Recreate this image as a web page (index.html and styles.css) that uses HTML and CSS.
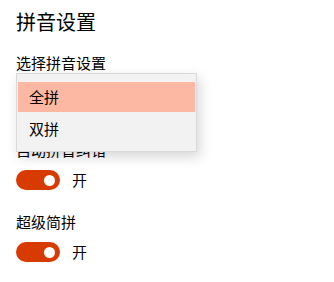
FILE: index.html
```html
<!DOCTYPE html>
<html lang="zh">
<head>
<meta charset="utf-8">
<link rel="stylesheet" href="styles.css">
</head>
<body>
<div class="page">
  <h1 class="title">拼音设置</h1>
  <div class="field">
    <div class="label">选择拼音设置</div>
    <div class="combo-space"></div>
    <div class="menu">
      <div class="item selected">全拼</div>
      <div class="item">双拼</div>
    </div>
  </div>
  <div class="setting">
    <div class="label">自动拼音纠错</div>
    <div class="toggle-row"><span class="toggle"><span class="knob"></span></span><span class="state">开</span></div>
  </div>
  <div class="setting">
    <div class="label">超级简拼</div>
    <div class="toggle-row"><span class="toggle"><span class="knob"></span></span><span class="state">开</span></div>
  </div>
</div>
</body>
</html>
```
FILE: styles.css
```css
html, body {
  margin: 0;
  padding: 0;
  background: #ffffff;
}
body {
  font-family: "Noto Sans CJK SC", "Noto Sans", sans-serif;
  color: #000;
  width: 334px;
  height: 282px;
  overflow: hidden;
}
.page {
  padding: 8px 16px 0 16px;
}
.title {
  font-size: 20px;
  font-weight: 400;
  line-height: 28px;
  margin: 0;
}
.field {
  position: relative;
  margin-top: 17px;
}
.label {
  font-size: 15px;
  line-height: 20px;
}
.combo-space {
  height: 67px;
}
.menu {
  position: absolute;
  left: 0;
  top: 20px;
  width: 177px;
  height: 69px;
  background: #f2f2f2;
  border: 1px solid #d9d9d9;
  padding: 8px 1px 0 1px;
  box-sizing: content-box;
  box-shadow: 3px 5px 12px rgba(0,0,0,0.16);
  z-index: 2;
}
.item {
  height: 30px;
  line-height: 30px;
  padding-left: 11px;
  font-size: 15px;
}
.item + .item {
  margin-top: 2px;
}
.selected {
  background: #fcb8a2;
}
.setting + .setting {
  margin-top: 22px;
}
.toggle-row {
  display: flex;
  align-items: center;
  gap: 12px;
  margin-top: 10px;
  height: 20px;
}
.toggle {
  width: 44px;
  height: 20px;
  border-radius: 10px;
  background: #d83b01;
  display: flex;
  align-items: center;
  justify-content: flex-end;
  padding-right: 5px;
  box-sizing: border-box;
}
.knob {
  width: 11px;
  height: 11px;
  border-radius: 50%;
  background: #fff;
}
.state {
  font-size: 15px;
  line-height: 20px;
}
```
